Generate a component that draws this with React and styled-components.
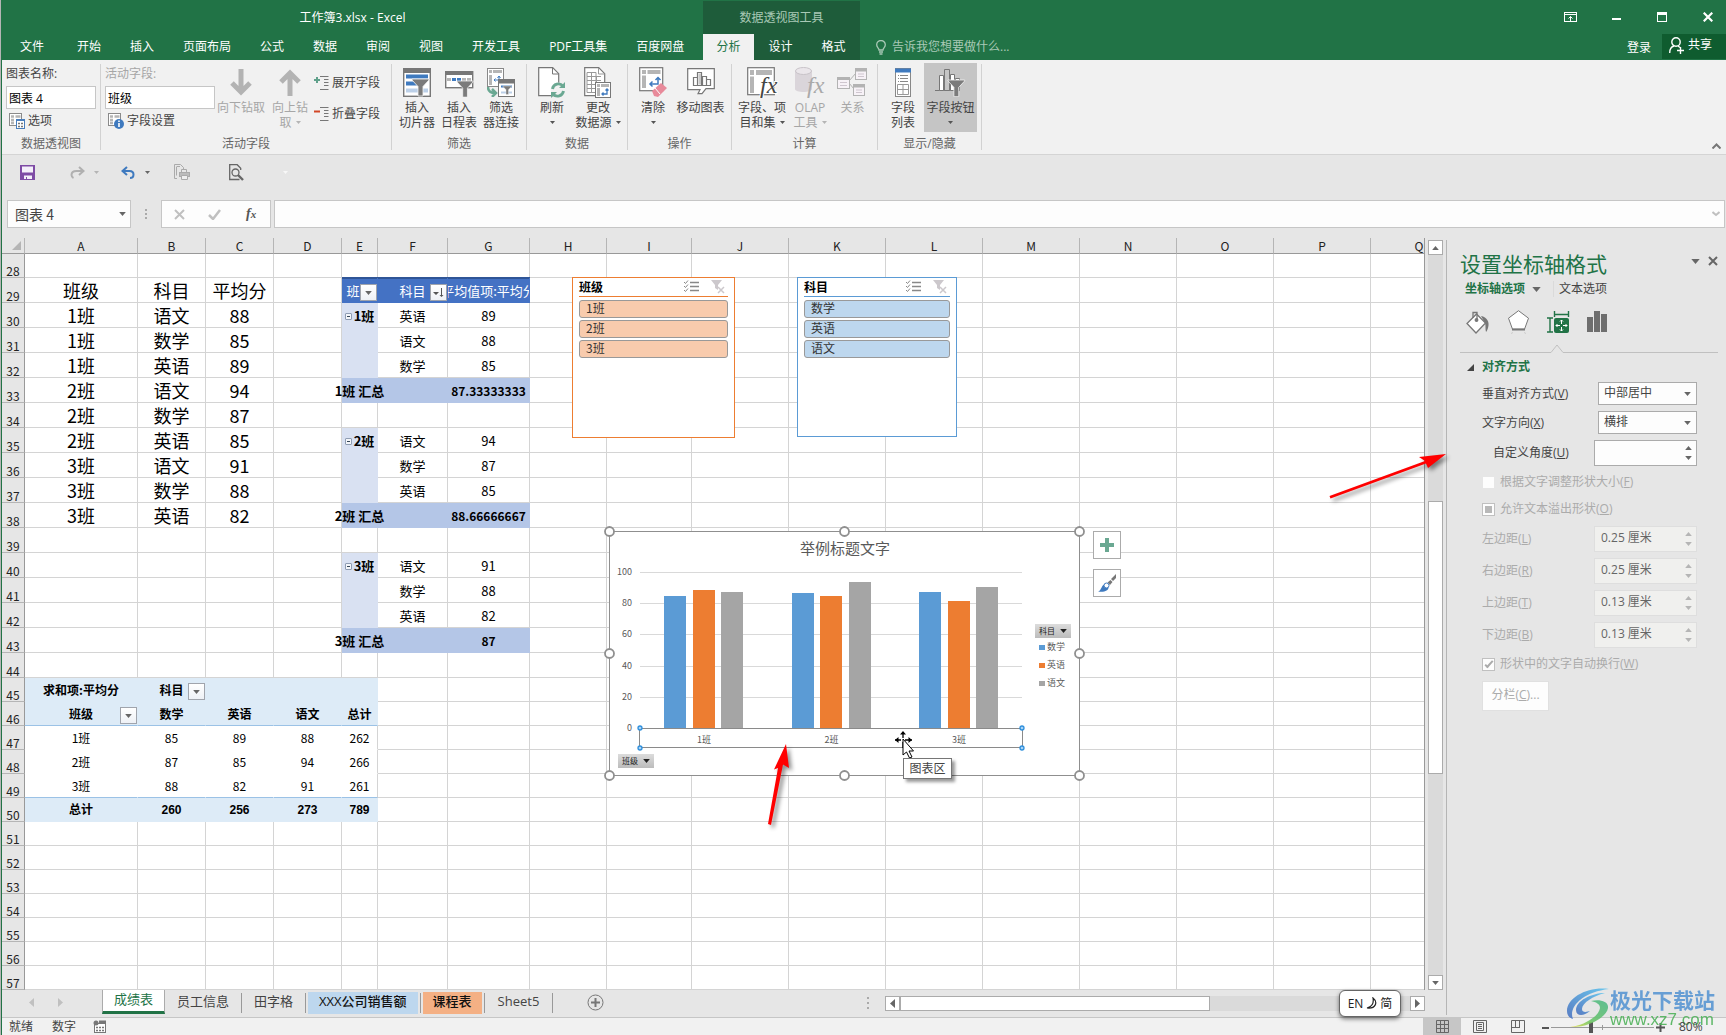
import React from "react";
import styled, { createGlobalStyle, css } from "styled-components";

const UI = '"Open Sans", "Noto Sans CJK SC", sans-serif';
const CJK = '"Noto Sans CJK SC", "Open Sans", sans-serif';
const GREEN = "#217346";

const Global = createGlobalStyle`
  *, *::before, *::after { box-sizing: border-box; }
  body { margin: 0; background: #e6e6e6; font: 12px/16px ${UI}; color: #444; }
  button, input, select { font: inherit; color: inherit; margin: 0; padding: 0; border: 0; background: none; border-radius: 0; outline: none; }
  svg { display: block; flex: none; }
`;

const Page = styled.div`
  position: relative;
  display: flex;
  flex-direction: column;
  min-height: 100vh;
  overflow: hidden;
  border-left: 1px solid #b5b5b5;
  background: #e6e6e6;
`;
const Window = styled.div`
  flex: 1;
  display: flex;
  flex-direction: column;
  border-left: 1px solid ${GREEN};
`;

/* ---------- title area ---------- */
const TitleArea = styled.header`
  display: flex;
  height: 60px;
  background: ${GREEN};
  color: #fff;
`;
const TitleBlock = styled.div`
  display: flex;
  flex-direction: column;
  min-width: ${(p) => (p.$grow ? "0" : "701px")};
  flex: ${(p) => (p.$grow ? 1 : "none")};
`;
const ContextBlock = styled.div`
  display: flex;
  flex-direction: column;
  background: #1e5c3a;
  border-top: 1px solid ${GREEN};
`;
const TitleRow = styled.div`
  flex: 1;
  display: flex;
  align-items: center;
  justify-content: ${(p) => (p.$end ? "flex-end" : "center")};
  padding-top: ${(p) => (p.$end ? 0 : 1)}px;
  color: ${(p) => (p.$soft ? "#a9c9b6" : "#fff")};
`;
const TabRow = styled.nav`
  display: flex;
  height: 26px;
  gap: ${(p) => (p.$tight ? 0 : 1)}px;
`;
const Tab = styled.button`
  padding: ${(p) => (p.$w ? 0 : "0 14px")};
  width: ${(p) => (p.$w ? p.$w + "px" : "auto")};
  line-height: 24px;
  white-space: nowrap;
  background: ${(p) => (p.$active ? "#f1f1f1" : "transparent")};
  color: ${(p) => (p.$active ? GREEN : "#fff")};
`;
const WindowButton = styled.button`
  width: 46px;
  height: 32px;
  padding-left: 10px;
  display: flex;
  align-items: center;
  justify-content: center;
`;
const Tell = styled.button`
  display: flex;
  align-items: center;
  gap: 6px;
  padding-left: 16px;
  color: #a9c9b6;
`;
const Spacer = styled.div`
  flex: 1;
`;
const SignIn = styled.button`
  padding: 0 10px;
  line-height: 23px;
`;
const Share = styled.button`
  display: flex;
  align-items: center;
  gap: 4px;
  width: 64px;
  height: 25px;
  padding: 0 0 3px 7px;
  background: #0f5c2f;
`;

/* ---------- ribbon ---------- */
const Ribbon = styled.section`
  display: flex;
  height: 95px;
  background: #f1f1f1;
  border-bottom: 1px solid #d4d4d4;
`;
const Group = styled.div`
  display: flex;
  flex-direction: column;
  padding: 3px 4px 0;
`;
const GroupBody = styled.div`
  display: flex;
  height: 69px;
`;
const GroupLabel = styled.div`
  margin-top: 4px;
  text-align: center;
  line-height: 16px;
  color: #666;
`;
const Separator = styled.div`
  width: 1px;
  height: 86px;
  margin-top: 4px;
  background: #d2d2d2;
`;
const BigButton = styled.button`
  width: ${(p) => p.$w}px;
  display: flex;
  flex-direction: column;
  align-items: center;
  padding-top: 3px;
  white-space: nowrap;
  line-height: 15px;
  color: ${(p) => (p.$off ? "#a6a6a6" : "#444")};
  background: ${(p) => (p.$on ? "#c5c5c5" : "transparent")};
`;
const IconSlot = styled.span`
  display: flex;
  align-items: center;
  justify-content: center;
  height: 32px;
  margin-bottom: 2px;
`;
const TextLine = styled.span`
  display: flex;
  align-items: center;
  justify-content: center;
  gap: 4px;
  height: 15px;
`;
const Field = styled.div`
  display: flex;
  flex-direction: column;
  width: ${(p) => p.$w}px;
  padding-top: 3px;
`;
const FieldLabel = styled.label`
  height: 20px;
  line-height: 16px;
  color: ${(p) => (p.$off ? "#a6a6a6" : "#444")};
`;
const FieldInput = styled.input`
  width: 100%;
  height: 23px;
  padding: 0 2px;
  background: #fff;
  border: 1px solid #c6c6c6;
  color: #000;
`;
const SmallButton = styled.button`
  display: flex;
  align-items: center;
  gap: 3px;
  height: 23px;
  padding-left: ${(p) => p.$pad || 0}px;
  white-space: nowrap;
`;
const FieldActions = styled.div`
  display: flex;
  flex-direction: column;
  gap: 8px;
  padding: 8px 0 0 1px;
  width: 74px;
`;
const RibbonToggle = styled.button`
  align-self: flex-end;
  margin: 0 5px 5px auto;
`;

/* ---------- quick access + formula bar ---------- */
const Quick = styled.div`
  display: flex;
  align-items: center;
  height: 45px;
  padding: 0 0 11px 18px;
`;
const QuickButton = styled.button`
  display: flex;
  align-items: center;
  gap: 9px;
  margin-right: ${(p) => p.$gap}px;
`;
const FormulaRow = styled.div`
  display: flex;
  height: 28px;
  margin: 0 1px 10px 5px;
`;
const Box = styled.div`
  display: flex;
  align-items: center;
  justify-content: space-between;
  background: #fdfdfd;
  border: 1px solid #c6c6c6;
  width: ${(p) => (p.$w ? p.$w + "px" : "auto")};
  flex: ${(p) => (p.$w ? "none" : 1)};
  padding: 0 ${(p) => p.$pad || 4}px;
`;
const FormulaGap = styled.div`
  width: 3px;
`;
const BarInput = styled.input`
  flex: 1;
  min-width: 0;
  padding-left: 3px;
  font: 14px/20px ${CJK};
`;
const Dots = styled.div`
  width: 30px;
  display: flex;
  align-items: center;
  justify-content: center;
`;

/* ---------- sheet ---------- */
const Body = styled.main`
  position: relative;
  flex: 1;
  display: flex;
`;
const SheetColumn = styled.section`
  flex: 1;
  min-width: 0;
  display: flex;
  flex-direction: column;
`;
const SheetRow = styled.div`
  flex: 1;
  display: flex;
`;
const Sheet = styled.div`
  position: relative;
  flex: 1;
  min-width: 0;
  overflow: hidden;
  border-right: 1px solid #999;
  background: linear-gradient(#e6e6e6 15px, #fff 15px);
`;
const Grid = styled.table`
  table-layout: fixed;
  width: 1px;
  border-collapse: separate;
  border-spacing: 0;
  font-family: ${CJK};
  color: #000;
`;
const Col = styled.col`
  width: ${(p) => p.$w}px;
`;
const ColHead = styled.th`
  height: 16px;
  padding: 0;
  background: #e6e6e6;
  border-right: 1px solid #b5b5b5;
  border-bottom: 1px solid #999;
  font-weight: 400;
  font-size: 12px;
  line-height: 15px;
  color: #222;
`;
const Corner = styled.td`
  background: #e6e6e6;
  border-right: 1px solid #b5b5b5;
  border-bottom: 1px solid #999;
  padding: 0 3px 3px 0;
  vertical-align: bottom;
  & > svg { margin-left: auto; }
`;
const RowHead = styled.th`
  padding: 0;
  height: ${(p) => p.$h}px;
  background: #e6e6e6;
  border-right: 1px solid #999;
  border-bottom: 1px solid #b5b5b5;
  font-weight: 400;
  font-size: 12px;
  line-height: 13px;
  vertical-align: bottom;
  text-align: center;
  color: #222;
`;
const Cell = styled.td`
  position: relative;
  z-index: ${(p) => (p.$spill ? 1 : "auto")};
  padding: 0;
  border-right: 1px solid ${(p) => p.$side || p.$line || "#d4d4d4"};
  border-bottom: 1px solid ${(p) => p.$under || p.$line || "#d4d4d4"};
  background: ${(p) => p.$bg || "transparent"};
  font-family: ${(p) => (p.$digits ? '"Liberation Sans", "Noto Sans CJK SC", sans-serif' : "inherit")};
  font-size: ${(p) => p.$size || 13}px;
  font-weight: ${(p) => (p.$bold ? 700 : 400)};
  color: ${(p) => p.$color || "#000"};
  ${(p) => p.$top && css`box-shadow: 0 -1px 0 #2f5597, inset 0 1px 0 #2f5597;`}
`;
const CellText = styled.div`
  display: flex;
  align-items: center;
  justify-content: center;
  gap: 2px;
  height: 20px;
  padding-top: ${(p) => (p.$raised ? 0 : 2)}px;
  line-height: 20px;
  white-space: nowrap;
  overflow: ${(p) => (p.$clip ? "hidden" : "visible")};
`;
const FilterButton = styled.button`
  position: absolute;
  right: 0;
  bottom: 1px;
  display: flex;
  align-items: center;
  justify-content: center;
  width: 17px;
  height: 17px;
  border: 1px solid #a0a4ac;
  background: linear-gradient(#fff, #eef1f6);
`;
const Collapse = styled.button`
  display: flex;
  align-items: center;
  justify-content: center;
  width: 7px;
  height: 7px;
  border: 1px solid #8f9db3;
  border-radius: 1px;
  background: #f4f6fa;
`;
const Floating = styled.div`
  position: absolute;
  left: ${(p) => p.$x}px;
  top: ${(p) => p.$y}px;
  width: ${(p) => p.$w}px;
  height: ${(p) => p.$h}px;
`;
const SlicerBox = styled(Floating)`
  z-index: 1;
  background: #fff;
  border: 1px solid ${(p) => p.$tone};
  padding: 0 6px;
`;
const SlicerHead = styled.div`
  display: flex;
  align-items: center;
  gap: 11px;
  height: 19px;
  margin-bottom: 3px;
  padding: 0 3px 1px 0;
  border-bottom: 1px solid ${(p) => p.$tone};
  font: 700 12px/16px ${CJK};
  color: #000;
`;
const SlicerItem = styled.button`
  display: block;
  width: 100%;
  height: 18px;
  margin-bottom: 2px;
  padding: 0 0 2px 6px;
  border: 1px solid #999;
  border-radius: 3px;
  background: ${(p) => p.$fill};
  text-align: left;
  font: 12px/14px ${CJK};
  color: #333;
`;
const ChartFrame = styled(Floating)`
  z-index: 1;
  background: #fff;
  border: 1px solid #8f8f8f;
  & > svg { position: absolute; left: -1px; top: -1px; overflow: visible; }
`;
const ChartButton = styled.button`
  position: absolute;
  left: ${(p) => p.$x}px;
  top: ${(p) => p.$y}px;
  display: flex;
  align-items: center;
  justify-content: center;
  gap: 5px;
  width: 36px;
  height: 14px;
  background: linear-gradient(#dcdcdc, #bcbcbc);
  font: 8px/14px ${CJK};
  color: #222;
`;
const SideButton = styled.button`
  position: absolute;
  left: 1091px;
  top: ${(p) => p.$y}px;
  display: flex;
  align-items: center;
  justify-content: center;
  width: 28px;
  height: 28px;
  background: #fff;
  border: 1px solid #ababab;
`;
const Tip = styled(Floating)`
  z-index: 1;
  background: #fff;
  border: 1px solid #767676;
  box-shadow: 3px 3px 3px rgba(0, 0, 0, 0.4);
  font: 12px/18px ${CJK};
  text-align: center;
  color: #444;
`;
const Overlay = styled(Floating)`
  z-index: 1;
  pointer-events: none;
  & > svg { overflow: visible; }
`;

/* ---------- scroll bars, sheet tabs ---------- */
const VScroll = styled.div`
  width: 21px;
  display: flex;
  flex-direction: column;
  padding: 2px 3px 0;
`;
const ScrollButton = styled.button`
  display: flex;
  align-items: center;
  justify-content: center;
  width: 15px;
  height: 15px;
  flex: none;
  background: #fff;
  border: 1px solid #ababab;
`;
const VTrack = styled.div`
  flex: 1;
  background: #dadada;
  padding-top: 246px;
`;
const VThumb = styled.div`
  height: 273px;
  background: #fff;
  border: 1px solid #ababab;
`;
const TabStrip = styled.div`
  display: flex;
  align-items: flex-start;
  height: 27px;
  padding-right: 21px;
`;
const StripNav = styled.div`
  display: flex;
  gap: 24px;
  width: 100px;
  padding: 8px 0 0 27px;
`;
const SheetTab = styled.button`
  height: ${(p) => (p.$active ? 24 : 22)}px;
  margin: ${(p) => (p.$active ? "0" : "2px 2px 0")};
  padding: 0 ${(p) => p.$pad || 10}px 3px;
  line-height: 19px;
  white-space: nowrap;
  font-size: 13px;
  font-family: ${UI};
  background: ${(p) => (p.$active ? "#fff" : p.$fill || "transparent")};
  color: ${(p) => (p.$active ? GREEN : p.$fill ? "#111" : "#444")};
  border-bottom: ${(p) => (p.$active ? "3px solid " + GREEN : "0")};
  border-left: ${(p) => (p.$active ? "1px solid #ababab" : "0")};
  border-right: ${(p) => (p.$active ? "1px solid #ababab" : "0")};
  font-weight: ${(p) => (p.$fill ? 500 : 400)};
`;
const TabRule = styled.div`
  width: 1px;
  height: 20px;
  margin-top: 3px;
  background: #999;
`;
const AddSheet = styled.button`
  margin: 4px 0 0 34px;
`;
const HScroll = styled.div`
  display: flex;
  width: 540px;
  margin-top: 6px;
`;
const HTrack = styled.div`
  flex: 1;
  background: #dadada;
`;
const HThumb = styled.div`
  width: 310px;
  height: 15px;
  background: #fff;
  border: 1px solid #ababab;
`;
const StripDots = styled.div`
  padding: 7px 15px 0 0;
`;
const ImePill = styled.div`
  position: absolute;
  right: 325px;
  bottom: 18px;
  z-index: 1;
  display: flex;
  align-items: center;
  justify-content: center;
  gap: 3px;
  width: 62px;
  height: 27px;
  background: #fff;
  border: 1px solid #666;
  border-radius: 6px;
  box-shadow: 0 2px 4px rgba(0, 0, 0, 0.5);
  color: #222;
`;

/* ---------- format pane ---------- */
const Pane = styled.aside`
  width: 280px;
  flex: none;
  margin: 2px 0;
  padding: 9px 8px 0 13px;
  border-left: 1px solid #b5b5b5;
`;
const PaneTop = styled.div`
  display: flex;
  align-items: flex-start;
  gap: 8px;
  height: 31px;
`;
const PaneTitle = styled.h1`
  flex: 1;
  margin: 0;
  font: 400 21px/28px ${CJK};
  color: ${GREEN};
`;
const PaneTabs = styled.div`
  display: flex;
  align-items: center;
  height: 18px;
  padding-left: 5px;
`;
const PaneTab = styled.button`
  display: flex;
  align-items: center;
  gap: 7px;
  padding-right: ${(p) => (p.$active ? 12 : 0)}px;
  margin-right: ${(p) => (p.$active ? 5 : 0)}px;
  border-right: ${(p) => (p.$active ? "1px solid #dadada" : 0)};
  font-weight: ${(p) => (p.$active ? 700 : 400)};
  color: ${(p) => (p.$active ? GREEN : "#444")};
`;
const PaneIcons = styled.div`
  display: flex;
  align-items: center;
  gap: 17px;
  margin: 12px 0 10px 6px;
  height: 24px;
`;
const PaneTool = styled.button`
  display: flex;
  align-items: center;
  justify-content: center;
  min-height: 24px;
`;
const PaneRule = styled.div`
  display: flex;
  align-items: flex-end;
`;
const RuleLine = styled.div`
  width: ${(p) => (p.$w ? p.$w + "px" : "auto")};
  flex: ${(p) => (p.$w ? "none" : 1)};
  height: 1px;
  background: #c0c0c0;
`;
const Form = styled.form`
  display: flex;
  flex-direction: column;
  gap: 6px;
  padding: 5px 21px 0 22px;
`;
const SectionHead = styled.h2`
  display: flex;
  align-items: center;
  gap: 8px;
  height: 18px;
  margin: 0 0 0 -15px;
  font: 700 12px/18px ${UI};
  color: ${GREEN};
`;
const FormRow = styled.div`
  display: flex;
  align-items: center;
  justify-content: space-between;
  padding-left: ${(p) => (p.$indent ? 11 : 0)}px;
  color: ${(p) => (p.$off ? "#ababab" : "#444")};
  & > label { white-space: nowrap; }
`;
const SelectWrap = styled.div`
  display: flex;
  align-items: center;
  width: 99px;
  height: 23px;
  background: #fdfdfd;
  border: 1px solid #ababab;
  & > svg { margin-left: -12px; pointer-events: none; }
`;
const Select = styled.select`
  appearance: none;
  width: 100%;
  height: 100%;
  padding: 0 5px 1px;
`;
const Spin = styled.div`
  display: flex;
  width: 103px;
  height: 26px;
  background: ${(p) => (p.$off ? "#f0f0ee" : "#fdfdfd")};
  border: 1px solid ${(p) => (p.$off ? "#dedede" : "#ababab")};
  color: #666;
  & > input { flex: 1; min-width: 0; padding: 0 6px 2px; }
`;
const SpinButtons = styled.div`
  display: flex;
  flex-direction: column;
  justify-content: center;
  gap: 6px;
  width: 11px;
  & > button { display: flex; }
`;
const Check = styled.label`
  display: flex;
  align-items: center;
  gap: 5px;
  height: 21px;
  padding-bottom: 1px;
  color: #ababab;
  white-space: nowrap;
`;
const Tick = styled.input`
  appearance: none;
  display: flex;
  align-items: center;
  justify-content: center;
  width: 13px;
  height: 13px;
  background: #fdfdfd;
  border: 1px solid ${(p) => (p.$mark ? "#c0c0c0" : "#e6e6e6")};
  &::after {
    content: "";
    ${(p) => p.$mark === "mixed" && css`width: 7px; height: 7px; background: #b8b8b8;`}
    ${(p) => p.$mark === "check" && css`width: 4px; height: 9px; margin-bottom: 2px; border: solid #ababab; border-width: 0 2px 2px 0; transform: rotate(42deg);`}
  }
`;
const PlainButton = styled.button`
  align-self: flex-start;
  width: 67px;
  height: 30px;
  padding-bottom: 2px;
  background: #fdfdfd;
  border: 1px solid #e0e0e0;
  color: #ababab;
`;

/* ---------- status bar ---------- */
const Status = styled.footer`
  display: flex;
  align-items: center;
  height: 18px;
  padding-left: 7px;
  border-top: 1px solid #c6c6c6;
  background: #f1f1f1;
`;
const StatusText = styled.span`
  margin-right: ${(p) => p.$gap}px;
  line-height: 16px;
`;
const ViewButton = styled.button`
  display: flex;
  align-items: center;
  justify-content: center;
  width: 38px;
  height: 18px;
  background: ${(p) => (p.$on ? "#c6c6c6" : "transparent")};
`;
const ZoomStep = styled.button`
  display: flex;
  align-items: center;
  width: 9px;
`;
const ZoomControl = styled.div`
  display: flex;
  align-items: center;
  padding: 2px 0 0 5px;
`;
const Zoom = styled.input`
  appearance: none;
  width: 103px;
  height: 13px;
  margin-right: 2px;
  background: linear-gradient(#999, #999) center / 100% 1px no-repeat, linear-gradient(#999, #999) center / 1px 5px no-repeat;
  &::-webkit-slider-thumb { appearance: none; width: 4px; height: 11px; background: #555; }
`;
const ZoomValue = styled.span`
  position: relative;
  z-index: 2;
  width: 61px;
  padding-left: 14px;
`;
const Watermark = styled.div`
  position: absolute;
  right: 11px;
  bottom: 6px;
  z-index: 1;
  display: flex;
  align-items: flex-end;
  pointer-events: none;
  opacity: 0.9;
`;
const MarkText = styled.div`
  display: flex;
  flex-direction: column;
`;
const MarkName = styled.span`
  font: 700 21px/24px ${CJK};
  color: #5a97d3;
`;
const MarkUrl = styled.span`
  font: 400 17px/18px "Liberation Sans", Arial, sans-serif;
  color: #4fb25a;
`;

/* ---------- icons ---------- */
const Caret = ({ c = "#666", w = 5, up }) => (
  <svg width={w} height={(w + 1) / 2} viewBox="0 0 10 6"><path d={up ? "M0 6h10L5 0z" : "M0 0h10L5 6z"} fill={c} /></svg>
);
const Side = ({ left, c = "#666" }) => (
  <svg width="5" height="9"><path d={left ? "M5 0v9L0 4.500z" : "M0 0v9l5-4.500z"} fill={c} /></svg>
);
const VDots = ({ h = 11 }) => (
  <svg width="3" height={h} fill="#aaa"><path d={`M0 0h2v2H0zM0 ${(h - 2) / 2}h2v2H0zM0 ${h - 2}h2v2H0z`} /></svg>
);
const Funnel = ({ x, y, s = 1 }) => (
  <path transform={`translate(${x} ${y}) scale(${s})`} d="M0 0h17v1l-6 6.500V17h-5V7.500L0 1z" fill="#7b7b7b" stroke="#f5f5f5" strokeWidth=".8" />
);
const I = {
  options: (
    <svg width="16" height="16" fill="none" stroke="#8a8a8a"><rect x=".5" y=".5" width="12" height="12" fill="#fff" /><path d="M2 3.500h3M6.500 3.500h5M2 7h3M2 10h3" strokeWidth="2.500" stroke="#b5b5b5" /><rect x="7.500" y="6.500" width="8" height="9" fill="#fff" stroke="#4a7ebb" /><path d="M7 7h9" stroke="#4a7ebb" strokeWidth="2" /><path d="M9 10.500h2M12 10.500h2M9 13.500h2M12 13.500h2" stroke="#777" strokeWidth="1.500" /></svg>
  ),
  info: (
    <svg width="16" height="16" fill="none"><rect x=".5" y=".5" width="12" height="12" fill="#fff" stroke="#8a8a8a" /><path d="M2 3.500h3M6.500 3.500h5M2 7h3M2 10h3" strokeWidth="2.500" stroke="#b5b5b5" /><circle cx="11" cy="11" r="5" fill="#3f7abf" /><path d="M11 10v4M11 7.500v1.500" stroke="#fff" strokeWidth="1.600" /></svg>
  ),
  arrow: (up) => (
    <svg width="22" height="27" fill="none" stroke="#b3b3b3" strokeWidth="5"><path d={up ? "M11 27V4M2 13l9-9 9 9" : "M11 0v23M2 14l9 9 9-9"} /></svg>
  ),
  lines: (minus) => (
    <svg width="15" height="14" fill="none"><path d="M6 .500h8.500M10 3.500h4.500M10 6.500h4.500M10 9.500h4.500M6 13.500h8.500" stroke="#777" /><path d={minus ? "M0 4.500h6" : "M0 4h6M3 1v6"} stroke={minus ? "#d24726" : "#5fa08a"} strokeWidth="2" /></svg>
  ),
  slicer: (
    <svg width="28" height="29" fill="none"><rect x=".7" y=".7" width="26.600" height="27.600" fill="#fff" stroke="#777" strokeWidth="1.400" /><path d="M0 2.500h28" stroke="#777" strokeWidth="5" /><path d="M3 8.500h22M3 15.500h16" stroke="#3f7abf" strokeWidth="4" /><path d="M3 22.500h22" stroke="#bcd0e8" strokeWidth="4" /><Funnel x={9} y={11} /></svg>
  ),
  timeline: (
    <svg width="29" height="30" fill="none"><rect x=".7" y="4.700" width="27" height="16" fill="#fff" stroke="#777" strokeWidth="1.400" /><path d="M0 6h28" stroke="#777" strokeWidth="4" /><path d="M2 12.500h24" stroke="#b5b5b5" strokeWidth="3" strokeDasharray="4 1" /><path d="M7 12.500h9" stroke="#3f7abf" strokeWidth="3" strokeDasharray="4 1" /><Funnel x={12} y={14} s={0.95} /></svg>
  ),
  connect: (
    <svg width="28" height="29" fill="none"><rect x=".5" y=".5" width="16" height="18" fill="#fff" stroke="#888" /><path d="M2 3.500h3M6 3.500h9" stroke="#b5b5b5" strokeWidth="3" /><path d="M3.500 7v10" stroke="#b5b5b5" strokeWidth="3" /><path d="M12 8v4H7M10.500 10L12 8l1.500 2M8.500 10.500L7 12l1.500 1.500" stroke="#3f7abf" /><rect x="11.500" y="11.500" width="16" height="17" fill="#fff" stroke="#777" /><path d="M11 13.500h17" stroke="#777" strokeWidth="4" /><path d="M14 18.500h11" stroke="#3f7abf" strokeWidth="2" /><path d="M14 24.500h11" stroke="#bcd0e8" strokeWidth="2" /><Funnel x={16} y={18} s={0.5} /><path d="M1 19c0 5 3 6 7 6M5 21l4 4-4 4" stroke="#6aa892" strokeWidth="2.500" /></svg>
  ),
  refresh: (
    <svg width="28" height="31" fill="none"><path d="M.7.7h14l6 6v22H.7z" fill="#fff" stroke="#777" strokeWidth="1.200" /><path d="M14.500 1v6h6" stroke="#777" /><circle cx="20" cy="23" r="7.500" fill="#f1f1f1" /><path d="M14.500 22a6 6 0 0 1 10.500-3M25.500 24a6 6 0 0 1-10.500 3" stroke="#6aa892" strokeWidth="2.800" /><path d="M27 15v6h-6zM13 31v-6h6z" fill="#6aa892" /></svg>
  ),
  source: (
    <svg width="28" height="31" fill="none"><path d="M.7.7h14l6 6v22H.7z" fill="#fff" stroke="#777" strokeWidth="1.200" /><path d="M14.500 1v6h6M3 5.500h9v20H3zM3 9.500h14M3 13.500h14M3 17.500h9M3 21.500h9M7.500 5v20M12.500 9v16" stroke="#999" /><rect x="11.500" y="15.500" width="15" height="15" fill="#fff" stroke="#777" /><path d="M13 18.500h3M17 18.500h8" stroke="#b5b5b5" strokeWidth="3" /><path d="M14.500 21v8" stroke="#b5b5b5" strokeWidth="3" /><path d="M23 22v5h-5M21.500 23.500L23 22l1.500 1.500M19.500 25.500L18 27l1.500 1.500" stroke="#3f7abf" strokeWidth="1.300" /></svg>
  ),
  clear: (
    <svg width="29" height="31" fill="none"><rect x=".7" y=".7" width="23" height="23" fill="#fff" stroke="#777" strokeWidth="1.200" /><path d="M3 5h4M8.500 5h13" stroke="#b5b5b5" strokeWidth="4" /><path d="M5 8.500V21" stroke="#b5b5b5" strokeWidth="4" /><path d="M19 11v6h-8M16.500 13l2.500-2.500 2.500 2.500M13.500 14.500L11 17l2.500 2.500" stroke="#3f7abf" strokeWidth="1.500" /><path d="M13 24l9-8 6 5-9 9-4-1z" fill="#e88a9a" /><path d="M16 21l5 6" stroke="#fff" /></svg>
  ),
  move: (
    <svg width="28" height="28" fill="none" stroke="#777" strokeWidth="1.200"><path d="M.7.7h26.600v20H19l-4 5h-4l2-4H.7z" fill="#fff" /><path d="M6.500 9.500h4v8h-4zM10.500 4.500h4v13h-4zM15.500 8.500h4v9h-4zM19.500 11.500h4v6h-4z" fill="#fff" /><path d="M11.500 5.500h2.500v11h-2.500z" fill="#c8c8c8" stroke="none" /></svg>
  ),
  fields: (
    <svg width="34" height="31" fill="none"><rect x="2.700" y=".7" width="26.600" height="27" fill="#fff" stroke="#777" strokeWidth="1.200" /><path d="M5 5.500h4M11 5.500h16" stroke="#b5b5b5" strokeWidth="5" /><path d="M7 9.500V26" stroke="#b5b5b5" strokeWidth="4" /><text x="15" y="26" fontFamily="Liberation Serif, serif" fontStyle="italic" fontSize="24" fill="#444" stroke="#fff" strokeWidth="2" paintOrder="stroke">fx</text></svg>
  ),
  olap: (
    <svg width="34" height="31" fill="none"><path d="M2 4v18c0 4 17 4 17 0V4z" fill="#dad5da" /><ellipse cx="10.500" cy="4" rx="8" ry="3.500" fill="#eae6ea" stroke="#c8c3c8" /><text x="14" y="26" fontFamily="Liberation Serif, serif" fontStyle="italic" fontSize="24" fill="#aaa">fx</text></svg>
  ),
  relation: (
    <svg width="31" height="29" fill="none" stroke="#b3b3b3"><path d="M12 13l7-8M12 15l5 6" /><g fill="#f7f2f7"><rect x=".5" y="9.500" width="12" height="11" /><rect x="18.500" y=".5" width="11" height="11" /><rect x="16.500" y="16.500" width="11" height="11" /></g><path d="M0 10.500h13M18 2h12M16 18h12" strokeWidth="3" /><path d="M3 14.500h7M3 17.500h7M21 6h6M21 8.500h6M19 22h6M19 24.500h6" stroke="#cfc6cf" /></svg>
  ),
  list: (
    <svg width="16" height="29" fill="none"><rect x=".5" y=".5" width="15" height="28" fill="#fff" stroke="#888" /><path d="M0 2.500h16" stroke="#3f7abf" strokeWidth="4" /><path d="M3 7.500h1M5 7.500h8M3 10.500h1M5 10.500h8M3 13.500h1M5 13.500h8" stroke="#888" /><path d="M2.500 16.500h11v10h-11zM8 16.500v10M2.500 21.500h11" stroke="#999" /></svg>
  ),
  chartButtons: (
    <svg width="31" height="30" fill="none" stroke="#777"><path d="M0 23.500h25" /><path d="M4.500 8.500h4v15h-4zM15.500 7.500h4v16h-4zM20.500 11.500h4v12h-4z" fill="#fff" /><path d="M9.500 2.500h5v21h-5z" fill="#c5c5c5" /><Funnel x={13} y={13} s={0.98} /></svg>
  ),
  save: (
    <svg width="15" height="15"><path d="M0 0h15v15H0z" fill="#7e4ba5" /><path d="M2 1.500h11v6H2zM4 10.500h8V14H7v-2H6v2H4z" fill="#f4effa" /></svg>
  ),
  redo: (c, flip) => (
    <svg width="15" height="13" fill="none" stroke={c} strokeWidth="2"><g transform={flip ? "translate(15 0) scale(-1 1)" : ""}><path d={flip ? "M13 5H6.500C4 5 2.500 6.500 2.500 8.500S4 12 6 12M9 1l4.500 4L9 9" : "M13 5H6.500C3 5 1.500 7 1.500 9c0 1.500 1 2.500 2 3M9 1l4.500 4L9 9"} /></g></svg>
  ),
  print: (
    <svg width="17" height="16" fill="none" stroke="#aaa"><path d="M3 14.500H.500V.500h6l3 3V5M2.500 2.500v9M3 2.500h3" /><path d="M7.500 8V5.500h5V8" /><rect x="5.500" y="8.500" width="10" height="4" fill="#bbb" /><path d="M7.500 11.500h6v4h-6z" fill="#eee" /></svg>
  ),
  preview: (
    <svg width="15" height="17" fill="none" stroke="#666" strokeWidth="1.300"><path d="M10.500 15.500H.7V.7h7.500l3.500 3.500V6" /><circle cx="6.500" cy="8.500" r="3.500" /><path d="M9 11l5 5" strokeWidth="2.400" /></svg>
  ),
  checklist: (
    <svg width="15" height="13" fill="none" stroke="#888"><path d="M6 2.500h9M6 6.500h9M6 10.500h9" strokeWidth="1.300" /><path d="M0 2l1.500 1.500L4 .500M0 6l1.500 1.500L4 4.500M0 10l1.500 1.500L4 8.500" /></svg>
  ),
  noFilter: (
    <svg width="15" height="14" fill="none"><path d="M1 0h11L8 5v5L5 8V5z" fill="#ccc8cc" /><path d="M8 7l6 6M14 7l-6 6" stroke="#ccc8cc" strokeWidth="1.500" /></svg>
  ),
};

/* ---------- workbook data ---------- */
const COLS = [["A", 113], ["B", 68], ["C", 68], ["D", 68], ["E", 36], ["F", 70], ["G", 82], ["H", 77], ["I", 85], ["J", 97], ["K", 97], ["L", 97], ["M", 97], ["N", 97], ["O", 97], ["P", 97], ["Q", 97]];
const ROWS = Array.from({ length: 30 }, (_, i) => 28 + i);
const heightOf = (r) => (r === 28 || r > 44 ? 24 : 25);

const cells = {};
const put = (ref, v) => { cells[ref] = v; };

[["班级", "科目", "平均分"], ["1班", "语文", "88"], ["1班", "数学", "85"], ["1班", "英语", "89"], ["2班", "语文", "94"], ["2班", "数学", "87"], ["2班", "英语", "85"], ["3班", "语文", "91"], ["3班", "数学", "88"], ["3班", "英语", "82"]]
  .forEach((row, i) => row.forEach((t, c) => put("ABC"[c] + (29 + i), { t, size: 18, raised: true })));

const HEAD = { bg: "#4472c4", line: "#4472c4", color: "#fff", top: true, clip: true };
put("E29", { ...HEAD, t: "班级", filter: "caret" });
put("F29", { ...HEAD, t: "科目", filter: "sort" });
put("G29", { ...HEAD, t: "平均值项:平均分" });
[[30, "1班", [["英语", 89], ["语文", 88], ["数学", 85]], "87.33333333"], [35, "2班", [["语文", 94], ["数学", 87], ["英语", 85]], "88.66666667"], [40, "3班", [["语文", 91], ["数学", 88], ["英语", 82]], "87"]]
  .forEach(([r, name, items, total]) => {
    items.forEach(([s, n], i) => {
      put("E" + (r + i), { t: i ? "" : name, bold: true, bg: "#d9e1f2", line: "#d9e1f2", collapse: !i });
      put("F" + (r + i), { t: s });
      put("G" + (r + i), { t: n });
    });
    const sum = { bg: "#b4c6e7", line: "#b4c6e7", bold: true };
    put("E" + (r + 3), { ...sum, t: name + " 汇总", spill: true });
    put("F" + (r + 3), { ...sum, t: "" });
    put("G" + (r + 3), { ...sum, size: 12, t: total });
  });

const SOFT = { bg: "#ddebf7", line: "#ddebf7", bold: true, size: 12, raised: true };
const pivotRow = (r, texts, style) => texts.forEach((t, i) => put("ABCDE"[i] + r, { ...style, t }));
pivotRow(45, ["求和项:平均分", "科目", "", "", ""], SOFT);
pivotRow(46, ["班级", "数学", "英语", "语文", "总计"], { ...SOFT, under: "#9bc2e6" });
const BARE = { line: "transparent", size: 12, raised: true };
pivotRow(47, ["1班", 85, 89, 88, 262], BARE);
pivotRow(48, ["2班", 87, 85, 94, 266], BARE);
pivotRow(49, ["3班", 88, 82, 91, 261], { ...BARE, under: "#9bc2e6" });
pivotRow(50, ["总计", 260, 256, 273, 789], { ...SOFT, digits: true });
[47, 48, 49].forEach((r) => { cells["E" + r].side = "#d4d4d4"; });
cells.A46.filter = "caret";
cells.B45.filter = "caret";

const SERIES = [["数学", "#5b9bd5"], ["英语", "#ed7d31"], ["语文", "#a5a5a5"]];
const CHART = [["1班", [85, 89, 88]], ["2班", [87, 85, 94]], ["3班", [88, 82, 91]]];

function SheetCell({ c }) {
  if (!c) return <Cell />;
  return (
    <Cell $bg={c.bg} $line={c.line} $side={c.side} $under={c.under} $size={c.size} $bold={c.bold} $color={c.color} $top={c.top} $spill={c.spill} $digits={c.digits}>
      <CellText $clip={c.clip} $raised={c.raised}>
        {c.collapse && <Collapse aria-label="折叠"><svg width="3" height="1"><path d="M0 0h3v1H0z" fill="#345" /></svg></Collapse>}
        {c.t}
      </CellText>
      {c.filter && (
        <FilterButton aria-label="筛选">
          {c.filter === "sort" ? <svg width="11" height="9"><path d="M0 4h6L3 7zM8 0h1v7h1.500L8.500 9l-2-2H8z" fill="#555" /></svg> : <Caret w={7} />}
        </FilterButton>
      )}
    </Cell>
  );
}

function Slicer({ title, items, tone, fill, ...pos }) {
  return (
    <SlicerBox $x={pos.x} $y={pos.y} $w={pos.w} $h={pos.h} $tone={tone}>
      <SlicerHead $tone={tone}>{title}<Spacer />{I.checklist}{I.noFilter}</SlicerHead>
      {items.map((t) => <SlicerItem key={t} $fill={fill}>{t}</SlicerItem>)}
    </SlicerBox>
  );
}

function Chart() {
  const x0 = 31, w = 382, y0 = 197, scale = 1.56;
  return (
    <ChartFrame $x={607} $y={293} $w={471} $h={245}>
      <svg width="471" height="245" fontFamily="Noto Sans CJK SC, sans-serif" fill="#595959">
        <text x="236" y="23" fontSize="15" textAnchor="middle">举例标题文字</text>
        {[0, 20, 40, 60, 80, 100].map((v) => {
          const y = Math.round(y0 - v * scale);
          return (
            <g key={v}>
              <path d={`M${x0} ${y + 0.5}h${w}`} stroke="#d9d9d9" />
              <text x="23" y={y + 3} fontSize="9" textAnchor="end">{v}</text>
            </g>
          );
        })}
        {CHART.map(([name, vals], g) => (
          <g key={name}>
            {vals.map((v, i) => (
              <rect key={i} x={Math.round(55 + g * 127.5 + i * 28.5)} y={Math.round(y0 - v * scale) + 1} width="22" height={Math.round(v * scale) - 1} fill={SERIES[i][1]} />
            ))}
            <text x={x0 + 64 + g * 127.5} y="212" fontSize="9" textAnchor="middle">{name}</text>
          </g>
        ))}
        <rect x={x0 - 0.5} y="197.500" width={w + 1} height="19" fill="none" stroke="#8a8a8a" />
        {[[x0, 197], [x0 + w, 197], [x0, 217], [x0 + w, 217]].map(([x, y]) => (
          <circle key={x + "-" + y} cx={x} cy={y} r="2" fill="#a9d3f5" stroke="#2e8fdc" strokeWidth="1.300" />
        ))}
        {SERIES.map(([name, c], i) => (
          <g key={name}>
            <rect x="430" y={114 + i * 18} width="6" height="5" fill={c} />
            <text x="438" y={119 + i * 18} fontSize="9">{name}</text>
          </g>
        ))}
        {[[0, 0], [235, 0], [470, 0], [0, 122], [470, 122], [0, 244], [235, 244], [470, 244]].map(([x, y]) => (
          <circle key={x + "_" + y} cx={x + 0.5} cy={y + 0.5} r="4.500" fill="#fff" stroke="#8f8f8f" strokeWidth="1.800" />
        ))}
      </svg>
      <ChartButton $x={425} $y={92}>科目<Caret w={7} c="#222" /></ChartButton>
      <ChartButton $x={8} $y={222}>班级<Caret w={7} c="#222" /></ChartButton>
    </ChartFrame>
  );
}

function Big({ icon, lines, w, caret, off, on }) {
  return (
    <BigButton $w={w} $off={off} $on={on}>
      <IconSlot>{icon}</IconSlot>
      {lines.map((t, i) => (
        <TextLine key={i}>{t}{caret && i === lines.length - 1 && <Caret c={off ? "#b5b5b5" : "#555"} />}</TextLine>
      ))}
    </BigButton>
  );
}

const Key = ({ t, k }) => <>{t}(<u>{k}</u>)</>;

function Spinner({ id, value, off }) {
  const c = off ? "#b5b5b5" : "#666";
  return (
    <Spin $off={off}>
      <input id={id} defaultValue={value} readOnly={off} />
      <SpinButtons>
        <button type="button" aria-label="增加"><Caret up w={7} c={c} /></button>
        <button type="button" aria-label="减少"><Caret w={7} c={c} /></button>
      </SpinButtons>
    </Spin>
  );
}

export default function App() {
  return (
    <Page>
      <Global />
      <Window>
        <TitleArea>
          <TitleBlock>
            <TitleRow>工作簿3.xlsx - Excel</TitleRow>
            <TabRow>
              <Tab $w={60}>文件</Tab>
              {["开始", "插入", "页面布局", "公式", "数据", "审阅", "视图", "开发工具", "PDF工具集", "百度网盘"].map((t) => <Tab key={t}>{t}</Tab>)}
            </TabRow>
          </TitleBlock>
          <ContextBlock>
            <TitleRow $soft>数据透视图工具</TitleRow>
            <TabRow $tight>
              <Tab $w={51} $active>分析</Tab>
              <Tab $w={53}>设计</Tab>
              <Tab $w={53}>格式</Tab>
            </TabRow>
          </ContextBlock>
          <TitleBlock $grow>
            <TitleRow $end>
              <WindowButton aria-label="功能区显示选项"><svg width="13" height="10" fill="none" stroke="#fff"><rect x=".5" y=".5" width="12" height="9" /><path d="M1 2.500h11M6.500 9V4.500M4.500 6.500l2-2 2 2" /></svg></WindowButton>
              <WindowButton aria-label="最小化"><svg width="9" height="10"><path d="M0 6h9v2H0z" fill="#fff" /></svg></WindowButton>
              <WindowButton aria-label="最大化"><svg width="10" height="10" fill="none" stroke="#fff"><rect x=".5" y=".5" width="9" height="9" /><path d="M0 1.500h10" strokeWidth="3" /></svg></WindowButton>
              <WindowButton aria-label="关闭"><svg width="10" height="10" stroke="#fff" strokeWidth="2.200"><path d="M.7.7l8.600 8.600M9.300.7L.7 9.300" /></svg></WindowButton>
            </TitleRow>
            <TabRow>
              <Tell>
                <svg width="10" height="15" fill="none" stroke="#a9c9b6" strokeWidth="1.300"><path d="M3 10c0-2-2.300-2.500-2.300-5.200a4.300 4.300 0 0 1 8.600 0C9.300 7.500 7 8 7 10zM3 12h4M3.500 14h3" /></svg>
                告诉我您想要做什么...
              </Tell>
              <Spacer />
              <SignIn>登录</SignIn>
              <Share>
                <svg width="15" height="17" fill="none" stroke="#fff" strokeWidth="1.400"><circle cx="7" cy="5" r="4.200" /><path d="M.7 16c0-4 2-6.500 4.500-7M9 9l2 1.500M8 13.500h7M11.500 10v7" /></svg>
                共享
              </Share>
            </TabRow>
          </TitleBlock>
        </TitleArea>

        <Ribbon>
          <Group>
            <GroupBody>
              <Field $w={90}>
                <FieldLabel htmlFor="chartName">图表名称:</FieldLabel>
                <FieldInput id="chartName" defaultValue="图表 4" />
                <SmallButton $pad={3}>{I.options}选项</SmallButton>
              </Field>
            </GroupBody>
            <GroupLabel>数据透视图</GroupLabel>
          </Group>
          <Separator />
          <Group>
            <GroupBody>
              <Field $w={110}>
                <FieldLabel $off htmlFor="activeField">活动字段:</FieldLabel>
                <FieldInput id="activeField" defaultValue="班级" />
                <SmallButton $pad={3}>{I.info}字段设置</SmallButton>
              </Field>
              <Big w={52} off icon={I.arrow(false)} lines={["向下钻取"]} />
              <Big w={46} off caret icon={I.arrow(true)} lines={["向上钻", "取"]} />
              <FieldActions>
                <SmallButton>{I.lines(false)}展开字段</SmallButton>
                <SmallButton>{I.lines(true)}折叠字段</SmallButton>
              </FieldActions>
            </GroupBody>
            <GroupLabel>活动字段</GroupLabel>
          </Group>
          <Separator />
          <Group>
            <GroupBody>
              <Big w={42} icon={I.slicer} lines={["插入", "切片器"]} />
              <Big w={42} icon={I.timeline} lines={["插入", "日程表"]} />
              <Big w={42} icon={I.connect} lines={["筛选", "器连接"]} />
            </GroupBody>
            <GroupLabel>筛选</GroupLabel>
          </Group>
          <Separator />
          <Group>
            <GroupBody>
              <Big w={42} caret icon={I.refresh} lines={["刷新", ""]} />
              <Big w={50} caret icon={I.source} lines={["更改", "数据源"]} />
            </GroupBody>
            <GroupLabel>数据</GroupLabel>
          </Group>
          <Separator />
          <Group>
            <GroupBody>
              <Big w={42} caret icon={I.clear} lines={["清除", ""]} />
              <Big w={53} icon={I.move} lines={["移动图表"]} />
            </GroupBody>
            <GroupLabel>操作</GroupLabel>
          </Group>
          <Separator />
          <Group>
            <GroupBody>
              <Big w={52} caret icon={I.fields} lines={["字段、项", "目和集"]} />
              <Big w={44} off caret icon={I.olap} lines={["OLAP", "工具"]} />
              <Big w={41} off icon={I.relation} lines={["关系"]} />
            </GroupBody>
            <GroupLabel>计算</GroupLabel>
          </Group>
          <Separator />
          <Group>
            <GroupBody>
              <Big w={42} icon={I.list} lines={["字段", "列表"]} />
              <Big w={53} on caret icon={I.chartButtons} lines={["字段按钮", ""]} />
            </GroupBody>
            <GroupLabel>显示/隐藏</GroupLabel>
          </Group>
          <Separator />
          <RibbonToggle aria-label="折叠功能区"><svg width="9" height="6" fill="none" stroke="#777" strokeWidth="2"><path d="M.5 5.500l4-4 4 4" /></svg></RibbonToggle>
        </Ribbon>

        <Quick>
          <QuickButton $gap={35} aria-label="保存">{I.save}</QuickButton>
          <QuickButton $gap={22} aria-label="重做">{I.redo("#b0b0b0")}<Caret c="#b5b5b5" /></QuickButton>
          <QuickButton $gap={24} aria-label="撤销">{I.redo("#3f7abf", true)}<Caret /></QuickButton>
          <QuickButton $gap={38} aria-label="打印">{I.print}</QuickButton>
          <QuickButton $gap={39} aria-label="打印预览">{I.preview}</QuickButton>
          <QuickButton $gap={0} aria-label="自定义"><Caret c="#f8f8f8" /></QuickButton>
        </Quick>

        <FormulaRow>
          <Box $w={124}><BarInput aria-label="名称框" defaultValue="图表 4" /><Caret w={7} /></Box>
          <Dots><VDots h={10} /></Dots>
          <Box $w={110} $pad={12}>
            <svg width="11" height="11" stroke="#c0c0c0" strokeWidth="2"><path d="M1 1l9 9M10 1l-9 9" /></svg>
            <svg width="13" height="11" fill="none" stroke="#c0c0c0" strokeWidth="2.500"><path d="M1 6l4 4 7-9" /></svg>
            <svg width="14" height="16"><text x="2" y="12" fontFamily="Liberation Serif, serif" fontStyle="italic" fontWeight="700" fontSize="14" fill="#555">f<tspan fontSize="11">x</tspan></text></svg>
          </Box>
          <FormulaGap />
          <Box><BarInput aria-label="编辑栏" /><svg width="8" height="6" fill="none" stroke="#c0c0c0" strokeWidth="2"><path d="M.5 1l3.500 3 3.500-3" /></svg></Box>
        </FormulaRow>

        <Body>
          <SheetColumn>
            <SheetRow>
              <Sheet>
                <Grid>
                  <colgroup>
                    <Col $w={23} />
                    {COLS.map(([n, w]) => <Col key={n} $w={w} />)}
                  </colgroup>
                  <thead>
                    <tr>
                      <Corner><svg width="9" height="9"><path d="M9 0v9H0z" fill="#b5b5b5" /></svg></Corner>
                      {COLS.map(([n]) => <ColHead key={n} scope="col">{n}</ColHead>)}
                    </tr>
                  </thead>
                  <tbody>
                    {ROWS.map((r) => (
                      <tr key={r}>
                        <RowHead scope="row" $h={heightOf(r)}>{r}</RowHead>
                        {COLS.map(([n]) => <SheetCell key={n} c={cells[n + r]} />)}
                      </tr>
                    ))}
                  </tbody>
                </Grid>
                <Slicer x={570} y={39} w={163} h={161} title="班级" items={["1班", "2班", "3班"]} tone="#ed7d31" fill="#f8cbad" />
                <Slicer x={795} y={39} w={160} h={160} title="科目" items={["数学", "英语", "语文"]} tone="#5b9bd5" fill="#bdd7ee" />
                <Chart />
                <SideButton $y={293} aria-label="图表元素"><svg width="14" height="14"><path d="M5 0h4v5h5v4H9v5H5V9H0V5h5z" fill="#6aa892" /></svg></SideButton>
                <SideButton $y={331} aria-label="图表样式">
                  <svg width="18" height="18" fill="none"><path d="M18 0v4l-3 3-2-2zM12.500 6l2 2-2.500 3-2.500-2.500z" fill="#777" /><path d="M0 17.500c4-1 3-7 7-7l3.500 3c0 3-4 5-10.500 4z" fill="#3f7abf" /><circle cx="8.500" cy="11.500" r="2.500" fill="#fff" stroke="#3f7abf" /></svg>
                </SideButton>
                <Overlay $x={893} $y={493} $w={20} $h={28}>
                  <svg width="20" height="28" fill="none"><path d="M8 1v16M0 9h17" stroke="#000" strokeWidth="1.300" strokeDasharray="6 4 7" /><path d="M8 0l3 3.500H5zM0 9l3.500-3v6zM17 9l-3.500-3v6z" fill="#000" /><path d="M8 8v16l3.500-3 3 6 2.500-1-3-6h4.500z" fill="#fff" stroke="#000" /></svg>
                </Overlay>
                <Tip $x={901} $y={520} $w={49} $h={21}>图表区</Tip>
                <Overlay $x={760} $y={500} $w={40} $h={90}>
                  <svg width="40" height="90"><g filter="drop-shadow(3px 3px 2px rgba(0,0,0,.45))"><path d="M6 86l10-56-4 1.500L24 6l3 24-6-3.500L9 87z" fill="#f00" /></g></svg>
                </Overlay>
              </Sheet>
              <VScroll>
                <ScrollButton aria-label="向上"><Caret up w={7} /></ScrollButton>
                <VTrack><VThumb /></VTrack>
                <ScrollButton aria-label="向下"><Caret w={7} /></ScrollButton>
              </VScroll>
            </SheetRow>
            <TabStrip>
              <StripNav><Side left c="#c0c0c0" /><Side c="#c0c0c0" /></StripNav>
              <SheetTab $active $pad={11}>成绩表</SheetTab>
              <SheetTab>员工信息</SheetTab><TabRule />
              <SheetTab>田字格</SheetTab><TabRule />
              <SheetTab $fill="#bdd7ee" $pad={11}>XXX公司销售额</SheetTab><TabRule />
              <SheetTab $fill="#f4b084">课程表</SheetTab><TabRule />
              <SheetTab $pad={11}>Sheet5</SheetTab><TabRule />
              <AddSheet aria-label="新工作表"><svg width="17" height="17" fill="none" stroke="#777"><circle cx="8.500" cy="8.500" r="7.500" /><path d="M4 8.500h9M8.500 4v9" strokeWidth="2" /></svg></AddSheet>
              <Spacer />
              <StripDots><VDots h={12} /></StripDots>
              <HScroll>
                <ScrollButton aria-label="向左"><Side left /></ScrollButton>
                <HTrack><HThumb /></HTrack>
                <ScrollButton aria-label="向右"><Side /></ScrollButton>
              </HScroll>
            </TabStrip>
          </SheetColumn>

          <Pane>
            <PaneTop>
              <PaneTitle>设置坐标轴格式</PaneTitle>
              <PaneTool aria-label="任务窗格选项"><Caret w={9} /></PaneTool>
              <PaneTool aria-label="关闭"><svg width="10" height="10" stroke="#666" strokeWidth="2"><path d="M1 1l8 8M9 1L1 9" /></svg></PaneTool>
            </PaneTop>
            <PaneTabs>
              <PaneTab $active>坐标轴选项<Caret w={9} /></PaneTab>
              <PaneTab>文本选项</PaneTab>
            </PaneTabs>
            <PaneIcons>
              <PaneTool aria-label="填充与线条"><svg width="24" height="23" fill="none" stroke="#777" strokeWidth="1.300"><path d="M10.500 3l9 9-9.500 10L1 12.500z" fill="#fff" /><path d="M7 7V1.500h4V9" /><circle cx="10.500" cy="9" r="1.300" fill="#777" /><path d="M15 5c6 1 9 6 7 12-1 3-2 4-2 4-1-3 0-6-1-9z" fill="#777" stroke="none" /></svg></PaneTool>
              <PaneTool aria-label="效果"><svg width="23" height="24" fill="none" stroke="#777"><path d="M11.500.7l10 7.500-4 11h-12l-4-11z" fill="#fff" /><path d="M5 19.500h13" strokeWidth="2" /><path d="M5.500 22l-1 2M17.500 22l1 2" stroke="#ccc" /></svg></PaneTool>
              <PaneTool aria-label="大小与属性"><svg width="23" height="22" fill="none" stroke={GREEN}><path d="M7.500 0v6M21.500 0v6M7 3.500h15" strokeWidth="1.400" /><path d="M0 7h6M0 21h6M3 7v14" strokeWidth="1.400" /><rect x="7" y="7" width="15" height="15" rx="2" fill={GREEN} stroke="none" /><path d="M14.500 9v4M14.500 16v4M9 14.500h4M16 14.500h4M13 10.500l1.500-1.500 1.500 1.500M13 18.500l1.500 1.500 1.500-1.500M10.500 13L9 14.500l1.500 1.500M18.500 13l1.500 1.500-1.500 1.500" stroke="#fff" /></svg></PaneTool>
              <PaneTool aria-label="坐标轴选项"><svg width="20" height="22"><path d="M0 6h6v15H0zM7 0h6v21H7zM14 3h6v18h-6z" fill="#6e6e6e" /></svg></PaneTool>
            </PaneIcons>
            <PaneRule>
              <RuleLine $w={91} />
              <svg width="12" height="9" fill="none" stroke="#c0c0c0"><path d="M0 8.500L6 1l6 7.500" /></svg>
              <RuleLine />
            </PaneRule>
            <Form onSubmit={(e) => e.preventDefault()}>
              <SectionHead><svg width="7" height="7"><path d="M7 0v7H0z" fill="#444" /></svg>对齐方式</SectionHead>
              <FormRow>
                <label htmlFor="valign"><Key t="垂直对齐方式" k="V" /></label>
                <SelectWrap><Select id="valign"><option>中部居中</option></Select><Caret w={7} /></SelectWrap>
              </FormRow>
              <FormRow>
                <label htmlFor="dir"><Key t="文字方向" k="X" /></label>
                <SelectWrap><Select id="dir"><option>横排</option></Select><Caret w={7} /></SelectWrap>
              </FormRow>
              <FormRow $indent>
                <label htmlFor="angle"><Key t="自定义角度" k="U" /></label>
                <Spinner id="angle" value="" />
              </FormRow>
              <Check><Tick type="checkbox" disabled /><span><Key t="根据文字调整形状大小" k="F" /></span></Check>
              <Check><Tick type="checkbox" disabled $mark="mixed" /><span><Key t="允许文本溢出形状" k="O" /></span></Check>
              {[["左边距", "L", "0.25 厘米"], ["右边距", "R", "0.25 厘米"], ["上边距", "T", "0.13 厘米"], ["下边距", "B", "0.13 厘米"]].map(([t, k, v]) => (
                <FormRow $off key={k}>
                  <label htmlFor={"m" + k}><Key t={t} k={k} /></label>
                  <Spinner off id={"m" + k} value={v} />
                </FormRow>
              ))}
              <Check><Tick type="checkbox" disabled defaultChecked $mark="check" /><span><Key t="形状中的文字自动换行" k="W" /></span></Check>
              <PlainButton><Key t="分栏" k="C" />...</PlainButton>
            </Form>
          </Pane>

          <Overlay $x={1320} $y={205} $w={130} $h={60}>
            <svg width="130" height="60"><g filter="drop-shadow(3px 3px 2px rgba(0,0,0,.45))"><path d="M7.500 53L103 18l-6-4 27-3-18 14-2-4.500L8.500 55.500z" fill="#f00" /></g></svg>
          </Overlay>
        </Body>

        <Status>
          <StatusText $gap={19}>就绪</StatusText>
          <StatusText $gap={17}>数字</StatusText>
          <svg width="13" height="13" fill="none" stroke="#777"><rect x="1.500" y="3.500" width="11" height="9" fill="#fff" /><path d="M6 2h7" strokeWidth="3" /><circle cx="3" cy="3" r="2.500" fill="#777" stroke="none" /><path d="M3 7.500h8M3 10.500h8" strokeDasharray="2 1" strokeWidth="1.500" /></svg>
          <Spacer />
          <ViewButton $on aria-label="普通"><svg width="13" height="13" fill="none" stroke="#666"><path d="M.500.500h12v12H.500zM.500 4.500h12M.500 8.500h12M4.500.500v12M8.500.500v12" /></svg></ViewButton>
          <ViewButton aria-label="页面布局"><svg width="14" height="13" fill="none" stroke="#666"><path d="M.500.500h13v12H.500zM3.500 2.500h7v8h-7zM5 4.500h4M5 6.500h4M5 8.500h4" /></svg></ViewButton>
          <ViewButton aria-label="分页预览"><svg width="14" height="13" fill="none" stroke="#666"><path d="M.500.500h13v12H.500zM4.500.500v7M8.500.500v7M.500 7.500h8.500" /></svg></ViewButton>
          <ZoomControl>
            <ZoomStep aria-label="缩小"><svg width="7" height="2"><path d="M0 0h7v2H0z" fill="#555" /></svg></ZoomStep>
            <Zoom type="range" aria-label="缩放" min="0" max="100" defaultValue="38" />
            <ZoomStep aria-label="放大"><svg width="9" height="9"><path d="M3.500 0h2v3.500H9v2H5.500V9h-2V5.500H0v-2h3.500z" fill="#555" /></svg></ZoomStep>
          </ZoomControl>
          <ZoomValue>80%</ZoomValue>
        </Status>
      </Window>

      <ImePill>EN<svg width="11" height="13" fill="none" stroke="#222" strokeWidth="1.200"><path d="M7 1c5 4 3 11-6 10 5-1 7-5 6-10z" /></svg>简</ImePill>
      <Watermark>
        <svg width="43" height="42" fill="none">
          <defs>
            <linearGradient id="sky" x1="1" y1="0" x2="0" y2="1"><stop offset="0" stopColor="#5ec3ee" /><stop offset="1" stopColor="#4a72c0" /></linearGradient>
            <linearGradient id="leaf" x1="1" y1="0" x2="0" y2="1"><stop offset="0" stopColor="#4fb98a" /><stop offset=".6" stopColor="#6cc46a" /><stop offset="1" stopColor="#e8e04a" /></linearGradient>
          </defs>
          <path d="M42 2C22-1 0 10 0 24c0 4 2 7 6 8C1 20 16 5 42 2z" fill="url(#sky)" />
          <path d="M38 6C24 6 9 14 9 23c0 6 7 7 14 1-3 1-8 2-8-2 0-6 11-13 23-16z" fill="url(#sky)" />
          <path d="M24 14c8-2 18 0 17 7-1 9-20 20-38 19 12-1 29-10 30-19 0-4-4-6-9-7z" fill="url(#leaf)" />
        </svg>
        <MarkText>
          <MarkName>极光下载站</MarkName>
          <MarkUrl>www.xz7.com</MarkUrl>
        </MarkText>
      </Watermark>
    </Page>
  );
}
